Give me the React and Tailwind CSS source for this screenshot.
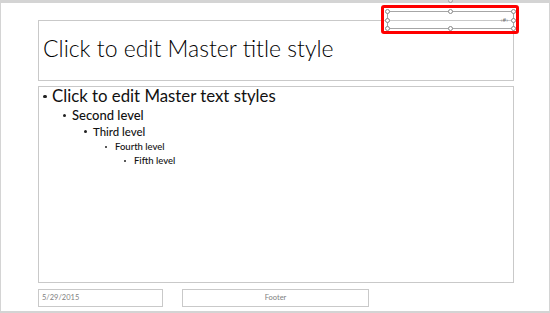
import React from 'react';

const levels = [
    { text: 'Click to edit Master text styles', pl: 'pl-[4px]', size: 'text-[16.8px]', h: 'h-[19px]', dot: 'w-[3.5px] h-[3.5px]', gap: 'w-[9px]' },
    { text: 'Second level', pl: 'pl-[24px]', size: 'text-[13px]', h: 'h-[18px]', dot: 'w-[3px] h-[3px]', gap: 'w-[9px]' },
    { text: 'Third level', pl: 'pl-[45px]', size: 'text-[11.4px]', h: 'h-[15px]', dot: 'w-[2.5px] h-[2.5px]', gap: 'w-[9px]' },
    { text: 'Fourth level', pl: 'pl-[66px]', size: 'text-[9.5px]', h: 'h-[15px]', dot: 'w-[2px] h-[2px]', gap: 'w-[10px]' },
    { text: 'Fifth level', pl: 'pl-[85px]', size: 'text-[9.5px]', h: 'h-[13px]', dot: 'w-[2px] h-[2px]', gap: 'w-[10px]' },
];

function Handle({ hidden }) {
    return (
        <span className={`w-[5px] h-[5px] rounded-full bg-white border border-[#8a8a8a] ${hidden ? 'invisible' : ''}`} />
    );
}

export default function App() {
    return (
        <div
            className="relative w-[550px] h-[313px] bg-[#d4d4d4] pt-[3px] pl-[1px] pr-[1px] pb-[2px] overflow-hidden"
            style={{ fontFamily: 'Lato, "Open Sans", sans-serif' }}
        >
            {/* Slide */}
            <div className="w-full h-full bg-white pl-[37px] pt-[17px] flex flex-col">
                {/* Title placeholder */}
                <div className="w-[476px] h-[61px] border border-[#c9c9c9] flex items-center pl-[4px] pb-[4px]">
                    <h1 className="text-[23px] font-light text-black leading-none">
                        Click to edit Master title style
                    </h1>
                </div>

                {/* Body placeholder */}
                <div className="mt-[5px] w-[476px] h-[197px] border border-[#c9c9c9] flex flex-col">
                    {levels.map((l, i) => (
                        <div key={i} className={`flex items-center ${l.h} ${l.pl} ${l.size} text-[#111] leading-none`}>
                            <span className={`${l.gap} shrink-0 flex items-center`}>
                                <span className={`${l.dot} rounded-full bg-[#222]`} />
                            </span>
                            <span className={i === 0 ? '' : 'font-medium'}>{l.text}</span>
                        </div>
                    ))}
                </div>

                {/* Footer row */}
                <div className="mt-[6px] flex gap-[19px]">
                    <div className="w-[125px] h-[18px] border border-[#c9c9c9] flex items-center pl-[3px] text-[7.5px] text-[#7f7f7f]">
                        5/29/2015
                    </div>
                    <div className="w-[187px] h-[18px] border border-[#c9c9c9] flex items-center justify-center text-[7.5px] text-[#7f7f7f]">
                        Footer
                    </div>
                </div>
            </div>

            {/* Slide number placeholder, selected */}
            <div className="absolute left-[387px] top-[11px] w-[127px] h-[18px] border border-[#a6a6a6] flex items-center justify-end pr-[5px]">
                <span className="text-[6.5px] leading-none text-[#777]">‹#›</span>
                <div className="absolute -inset-[3px] flex flex-col justify-between">
                    <div className="flex justify-between"><Handle /><Handle /><Handle /></div>
                    <div className="flex justify-between"><Handle /><Handle hidden /><Handle /></div>
                    <div className="flex justify-between"><Handle /><Handle /><Handle /></div>
                </div>
            </div>
            <span className="absolute left-[448px] -top-[2px] w-[5px] h-[5px] rounded-full bg-[#e5e5e5] border border-[#a0a0a0]" />

            {/* Red highlight */}
            <div className="absolute left-[381px] top-[5px] w-[138px] h-[29px] border-[3px] border-[#ff0000] rounded-[3px]" />
        </div>
    );
}
